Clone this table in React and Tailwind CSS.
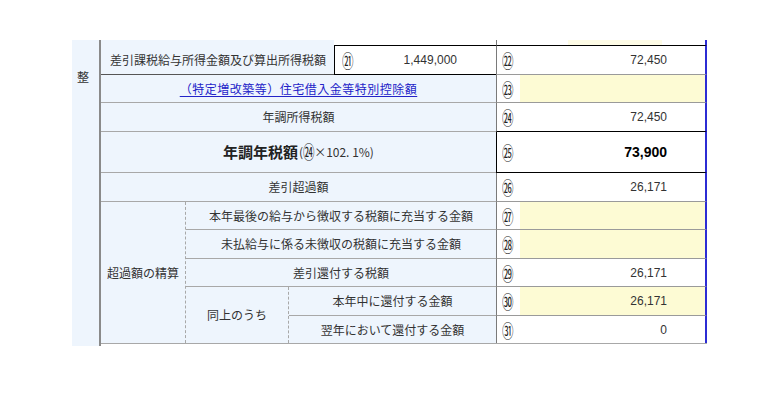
import React from 'react';

const JP = "font-['Noto_Sans_CJK_JP','Liberation_Sans',sans-serif]";
const NUM = "font-['Liberation_Sans','Noto_Sans_CJK_JP',sans-serif]";

// circled number, drawn narrow and tall like the original form
function Mark({ children }) {
  return <span className={`inline-block origin-left scale-x-[0.64] text-[18px] leading-none text-[#222] ${JP}`}>{children}</span>;
}

// right-hand value column: circled mark + amount
function Amount({ mark, value, yellow, strong, bottom = 'gray', last }) {
  const bottomCls = last ? '' : bottom === 'black' ? 'border-b border-b-black' : 'border-b border-b-[#9a9a9a]';
  return (
    <div
      className={`flex w-[211px] shrink-0 border-l border-r-2 border-r-[#2c2cd4] ${strong ? 'border-l-black' : 'border-l-[#7a7a7a]'} ${bottomCls}`}
    >
      <div className="w-[23px] shrink-0 bg-white pl-[5px] flex items-center">
        <Mark>{mark}</Mark>
      </div>
      <div
        className={`flex-1 flex items-center justify-end pr-[38px] ${NUM} ${yellow ? 'bg-[#fdfbd4]' : 'bg-white'} ${
          strong ? 'text-[14px] font-bold text-black' : 'text-[12px] text-[#333]'
        }`}
      >
        {value}
      </div>
    </div>
  );
}

function Row({ h, label, mark, value, yellow, strong, labelBottom = 'gray', rightBottom = 'gray', last, children }) {
  const lb = last ? '' : labelBottom === 'dark' ? 'border-b border-b-[#555]' : 'border-b border-b-[#a8a8a8]';
  return (
    <div className={`flex ${h}`}>
      <div className={`flex-1 flex items-center justify-center bg-[#eef5fd] text-[12px] text-[#333] ${JP} ${lb}`}>
        {children || label}
      </div>
      <Amount mark={mark} value={value} yellow={yellow} strong={strong} bottom={rightBottom} last={last} />
    </div>
  );
}

export default function App() {
  return (
    <div className="w-[784px] h-[394px] bg-white pt-[40px] pl-[72px] flex items-start">
      {/* left strip */}
      <div className={`w-[29px] h-[306px] bg-[#eef5fd] border-r-2 border-r-[#8a8a8a] pt-[31px] pl-[5px] text-[12px] leading-none text-[#333] ${JP}`}>
        整
      </div>

      <div className="w-[606px] flex flex-col">
        {/* cut-off row above */}
        <div className="flex h-[6px]">
          <div className="w-[233px] bg-[#eef5fd]" />
          <div className="flex-1 bg-white border-b border-b-black" />
          <div className="w-[211px] flex border-l border-l-[#7a7a7a] border-r-2 border-r-[#2c2cd4] border-b border-b-black">
            <div className="w-[71px] bg-white" />
            <div className="w-[94px] bg-[#fefce6]" />
            <div className="flex-1 bg-white" />
          </div>
        </div>

        {/* 21 / 22 */}
        <div className="flex h-[29px]">
          <div className={`w-[233px] flex items-center pl-[9px] bg-[#eef5fd] text-[12px] text-[#333] border-b border-b-[#555] ${JP}`}>
            差引課税給与所得金額及び算出所得税額
          </div>
          <div className="flex-1 flex items-center bg-white border-l border-l-black border-b border-b-black">
            <span className="pl-[7px] flex items-center">
              <Mark>㉑</Mark>
            </span>
            <span className={`flex-1 text-right pr-[39px] text-[12px] text-[#333] ${NUM}`}>1,449,000</span>
          </div>
          <Amount mark="㉒" value="72,450" bottom="gray" />
        </div>

        <Row h="h-[28px]" mark="㉓" yellow>
          <span className="text-[#2323c8] underline underline-offset-2 tracking-[0.5px]">（特定増改築等）住宅借入金等特別控除額</span>
        </Row>
        <Row h="h-[29px]" label="年調所得税額" mark="㉔" value="72,450" rightBottom="black" />
        <Row h="h-[41px]" mark="㉕" value="73,900" strong rightBottom="black">
          <span className="text-[15px] font-bold text-[#222]">年調年税額</span>
          <span className="flex items-center text-[12px] ml-[1px]">
            (<span className="inline-block w-[11px] overflow-visible"><Mark>㉔</Mark></span>×102. 1%)
          </span>
        </Row>
        <Row h="h-[29px]" label="差引超過額" mark="㉖" value="26,171" />

        {/* 超過額の精算 block */}
        <div className="flex border-b border-b-[#a8a8a8]">
          <div className={`w-[85px] shrink-0 flex items-center justify-center bg-[#eef5fd] border-r border-dashed border-r-[#a8a8a8] text-[12px] text-[#333] ${JP}`}>
            超過額の精算
          </div>
          <div className="flex-1 flex flex-col">
            <Row h="h-[28px]" label="本年最後の給与から徴収する税額に充当する金額" mark="㉗" yellow />
            <Row h="h-[29px]" label="未払給与に係る未徴収の税額に充当する金額" mark="㉘" yellow />
            <Row h="h-[28px]" label="差引還付する税額" mark="㉙" value="26,171" />
            <div className="flex">
              <div className={`w-[103px] shrink-0 flex items-center justify-center bg-[#eef5fd] border-r border-dashed border-r-[#a8a8a8] text-[12px] text-[#333] ${JP}`}>
                同上のうち
              </div>
              <div className="flex-1 flex flex-col">
                <Row h="h-[29px]" label="本年中に還付する金額" mark="㉚" value="26,171" yellow />
                <Row h="h-[27px]" label="翌年において還付する金額" mark="㉛" value="0" last />
              </div>
            </div>
          </div>
        </div>
      </div>
    </div>
  );
}
